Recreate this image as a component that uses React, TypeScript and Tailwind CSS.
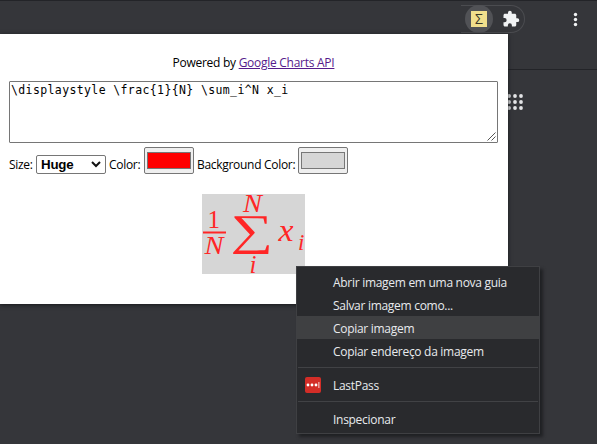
import React from "react";

const ui = "font-['Open_Sans','Noto_Sans',sans-serif]";

function Toolbar() {
  return (
    <header className="h-[70px] border-t border-b border-[#232428] flex justify-end items-start">
      <div className="mt-1 h-7 w-16 rounded-r-full border border-l-0 border-[#4b4c50] flex items-center">
        <div className="ml-1 size-7 rounded-full bg-[#515256] flex items-center justify-center shrink-0">
          <div className="size-4 bg-[#f1df8c] text-[#3a3728] flex items-center justify-center text-[14px] leading-none font-['Open_Sans',sans-serif]">
            Σ
          </div>
        </div>
        <svg className="ml-[9px] size-[18px] shrink-0" viewBox="0 0 24 24" fill="#f1f3f4">
          <path d="M20.5 11H19V7c0-1.1-.9-2-2-2h-4V3.5a2.5 2.5 0 0 0-5 0V5H4c-1.1 0-2 .9-2 2v3.8h1.5a2.7 2.7 0 0 1 0 5.4H2V20c0 1.100.9 2 2 2h3.800v-1.500a2.700 2.700 0 0 1 5.400 0V22H17c1.100 0 2-.9 2-2v-4h1.500a2.500 2.500 0 0 0 0-5z" />
        </svg>
      </div>
      <svg className="mt-[10px] ml-[48px] mr-[19px] w-[5px] h-4" viewBox="0 0 5 16" fill="#f1f3f4">
        <circle cx="2.500" cy="3.500" r="1.700" />
        <circle cx="2.500" cy="8.500" r="1.700" />
        <circle cx="2.500" cy="13.500" r="1.700" />
      </svg>
    </header>
  );
}

function AppsGrid() {
  return (
    <svg className="mt-6 ml-[506px] w-[18px] h-4" viewBox="0 0 18 16" fill="#e3e4e6">
      {[2, 8, 14].map((y) =>
        [3, 9, 15].map((x) => <circle key={`${x}-${y}`} cx={x} cy={y} r="1.900" />)
      )}
    </svg>
  );
}

function Swatch({ color }: { color: string }) {
  return (
    <span className="h-[27px] w-[50px] shrink-0 rounded-[2px] border border-[#767676] bg-[#efefef] px-0.5 py-1 flex">
      <span className={`flex-1 border border-[#777777] ${color}`} />
    </span>
  );
}

function Formula() {
  return (
    <svg
      className="w-[103px] h-20 overflow-visible bg-[#d6d6d6] font-['Liberation_Serif',serif]"
      viewBox="0 0 103 80"
      fill="#ff2626"
    >
      <text x="5.500" y="34" fontSize="25" textLength="12">1</text>
      <rect x="1" y="37.500" width="23" height="2" />
      <text x="2.500" y="60" fontSize="25" fontStyle="italic" textLength="19" lengthAdjust="spacingAndGlyphs">N</text>
      <text x="41" y="17.500" fontSize="25" fontStyle="italic" textLength="19" lengthAdjust="spacingAndGlyphs">N</text>
      <text transform="translate(28.500 50.500) scale(1.420 1.040)" fontSize="42">∑</text>
      <text x="47.500" y="79" fontSize="25" fontStyle="italic">i</text>
      <text x="76.500" y="47" fontSize="31" fontStyle="italic" textLength="15" lengthAdjust="spacingAndGlyphs">x</text>
      <text x="96" y="55.500" fontSize="23" fontStyle="italic">i</text>
    </svg>
  );
}

function Popup() {
  return (
    <main className={`absolute left-0 top-[34px] w-[508px] h-[270px] bg-white pl-[9px] pr-[10px] pt-5 text-black text-[12px] shadow-[0_1px_4px_#18191c] ${ui}`}>
      <p className="h-[27px] leading-[18px] text-center tracking-[-0.270px]">
        Powered by <a className="text-[#551a8b] underline">Google Charts API</a>
      </p>
      <div className="relative h-[62px] border border-[#767676] rounded-[1px] px-px pt-px leading-[14px] text-[11.500px] tracking-[0.380px] whitespace-pre font-['DejaVu_Sans_Mono',monospace]">
        {"\\displaystyle \\frac{1}{N} \\sum_i^N x_i"}
        <svg className="absolute right-px bottom-px size-[9px]" viewBox="0 0 9 9" stroke="#555" fill="none">
          <path d="M.5 8.500l8-8M4.500 8.500l4-4" />
        </svg>
      </div>
      <div className="mt-1 h-[27px] flex items-end">
        <span className="w-[27px] leading-[18px] tracking-[-0.300px]">Size:</span>
        <span className="w-[70px] h-[19px] border border-[#767676] rounded-[2px] pl-1 pr-1 flex items-center justify-between font-bold text-[13.333px] leading-none font-['Liberation_Sans',sans-serif]">
          <span className="tracking-[-0.200px]">Huge</span>
          <svg className="w-[10px] h-[7px]" viewBox="0 0 10 7" fill="none" stroke="#111" strokeWidth="2">
            <path d="M1 1l4 4 4-4" />
          </svg>
        </span>
        <span className="ml-[3px] w-[35px] leading-[18px] tracking-[-0.300px]">Color:</span>
        <Swatch color="bg-[#ff0000]" />
        <span className="ml-[3px] w-[101px] leading-[18px] tracking-[-0.300px] whitespace-nowrap">Background Color:</span>
        <Swatch color="bg-[#d6d6d6]" />
      </div>
      <div className="mt-5 flex justify-center">
        <Formula />
      </div>
    </main>
  );
}

function MenuItem({ label, active = false }: { label: string; active?: boolean }) {
  return (
    <div className={`h-[23px] pl-9 pt-0.5 flex items-center ${active ? "bg-[#3f4042]" : ""}`}>{label}</div>
  );
}

function ContextMenu() {
  return (
    <nav className={`absolute left-[296px] top-[266px] w-[244px] h-[168px] border border-[#3f4043] bg-[#292a2d] pt-[3px] text-[12px] text-[#e8eaed] tracking-[-0.290px] shadow-[3px_3px_3px_#202124] ${ui}`}>
      <MenuItem label="Abrir imagem em uma nova guia" />
      <MenuItem label="Salvar imagem como..." />
      <MenuItem label="Copiar imagem" active />
      <MenuItem label="Copiar endereço da imagem" />
      <div className="mt-[5px] mx-px h-px bg-[#414245]" />
      <div className="h-[33px] pl-2 flex items-center gap-3 pt-0.5">
        <span className="-mt-0.5 size-4 rounded-[2px] bg-[#d32d27] flex items-center justify-center">
          <svg className="w-3.5 h-2" viewBox="0 0 14 8" fill="white">
            <circle cx="2" cy="4" r="1.400" />
            <circle cx="6" cy="4" r="1.400" />
            <circle cx="10" cy="4" r="1.400" />
            <rect x="12.500" y="1" width=".8" height="6" />
          </svg>
        </span>
        LastPass
      </div>
      <div className="mx-px h-px bg-[#414245]" />
      <div className="h-9 pl-9 flex items-center">Inspecionar</div>
    </nav>
  );
}

export default function App() {
  return (
    <div className="relative w-[597px] h-[444px] overflow-hidden bg-[#35363a]">
      <Toolbar />
      <AppsGrid />
      <Popup />
      <ContextMenu />
    </div>
  );
}
